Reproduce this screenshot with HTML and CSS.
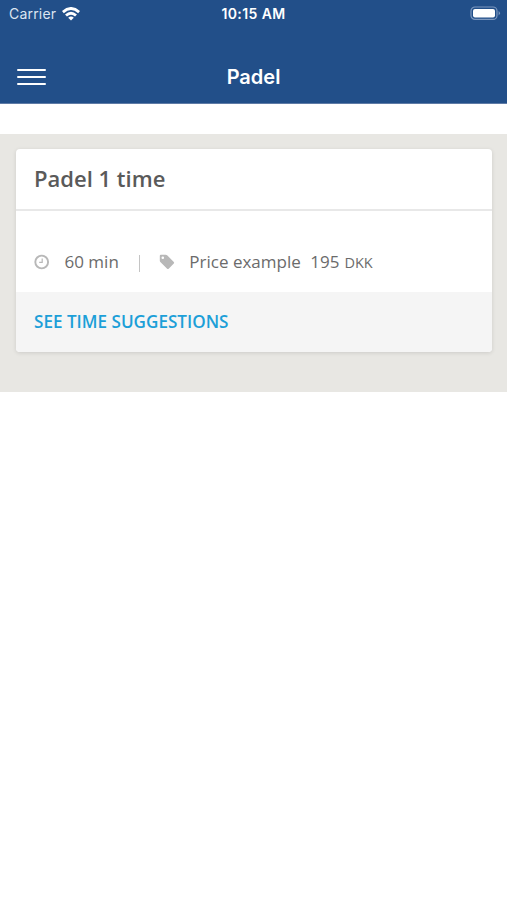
FILE: index.html
```html
<!DOCTYPE html>
<html lang="en">
<head>
<meta charset="UTF-8">
<meta name="viewport" content="width=device-width, initial-scale=1.0">
<title>Padel</title>

<link rel="stylesheet" href="styles.css">
</head>

<body>

<!-- HEADER -->
<header>
  <div class="status">
    <div class="carrier">
      <span>Carrier</span>
      <svg class="wifi" width="18" height="14" viewBox="0 0 18 14" fill="none" stroke="#fff" stroke-width="2.8">
        <path d="M.9 5.1Q9-2.2 17.1 5.1"/>
        <path d="M4 8.6Q9 3.9 14 8.6"/>
        <path d="M9 13.6L6.2 10.7Q9 8.5 11.8 10.7Z" fill="#fff" stroke="none"/>
      </svg>
    </div>
    <div class="clock">10:15 AM</div>
    <div class="power">
      <svg width="31" height="15" viewBox="0 0 31 15">
        <rect x="1" y="1" width="26" height="12.4" rx="4" fill="none" stroke="#7d98bf" stroke-width="1.2"/>
        <rect x="3" y="3" width="22" height="8.4" rx="2" fill="#fff"/>
        <path d="M28.6 5Q31.4 7.2 28.6 9.4Z" fill="#7d98bf"/>
      </svg>
    </div>
  </div>
  <div class="navbar">
    <div class="menu">
      <span></span>
      <span></span>
      <span></span>
    </div>
    <h1>Padel</h1>
  </div>
</header>

<!-- ACTIVITIES -->
<main>
  <section class="card">
    <h2>Padel 1 time</h2>
    <div class="info">
      <svg class="time-icon" width="16" height="16" viewBox="0 0 16 16" fill="none" stroke="#b8b8b8">
        <circle cx="7.7" cy="8" r="6.4" stroke-width="1.9"/>
        <path d="M8.2 4.4V8.4H5.2" stroke-width="1.2"/>
      </svg>
      <span class="duration">60 min</span>
      <span class="line"></span>
      <svg class="tag-icon" width="16" height="16" viewBox="0 0 16 16">
        <path fill="#b8b8b8" fill-rule="evenodd" d="M1.8.8H6.6Q7.6.8 8.4 1.6L14.8 8Q15.6 8.8 14.8 9.6L9.7 14.7Q8.9 15.4 8.1 14.7L1.6 8.2Q.8 7.4.8 6.4V1.8Q.8.8 1.8.8ZM3.8 2.5A1.3 1.3 0 1 0 3.8 5.1A1.3 1.3 0 1 0 3.8 2.5Z"/>
      </svg>
      <span class="label">Price example</span>
      <span class="price">195</span>
      <span class="currency">DKK</span>
    </div>
    <a class="suggestions" href="#">SEE TIME SUGGESTIONS</a>
  </section>
</main>

</body>
</html>
```

FILE: styles.css
```css
/* RESET */
*{
  margin:0;
  padding:0;
  box-sizing:border-box;
}

body{
  background:#fff;
  color:#6b6b6b;
  font-family:"Open Sans", sans-serif;
}

/* HEADER */
header{
  height:104px;
  background:#224f89;
  border-bottom:1px solid #5f7ba6;
  color:white;
  font-family:Inter, sans-serif;
}

.status{
  display:grid;
  grid-template-columns:1fr auto 1fr;
  align-items:center;
  height:27px;
  padding:0 6px 0 9px;
}

.carrier{
  display:flex;
  align-items:center;
  gap:6px;
  font-size:14px;
  letter-spacing:0.2px;
  color:#dce5f1;
}

.clock{
  margin-right:3px;
  font-size:14px;
  font-weight:600;
  letter-spacing:0.4px;
}

.power{
  display:flex;
  justify-content:flex-end;
}

.navbar{
  display:grid;
  grid-template-columns:1fr auto 1fr;
  align-items:center;
  height:54px;
  margin-top:22px;
  padding:0 16px;
}

.menu{
  display:flex;
  flex-direction:column;
  gap:4.6px;
  width:29px;
  margin:2px 0 0 1px;
}

.menu span{
  height:2.5px;
  background:white;
  border-radius:1px;
}

h1{
  margin-top:2px;
  font-size:20px;
  font-weight:600;
}

/* ACTIVITIES */
main{
  height:258px;
  margin-top:30px;
  padding:15px 15px 0 16px;
  background:#e8e7e3;
}

.card{
  height:203px;
  background:white;
  border-radius:4px;
  box-shadow:0 1px 4px rgba(0,0,0,0.12);
  overflow:hidden;
}

h2{
  height:62px;
  padding-left:18px;
  border-bottom:2px solid #e8e8e8;
  color:#5a5a5a;
  font-size:22px;
  font-weight:600;
  line-height:59px;
}

.info{
  display:flex;
  align-items:center;
  height:81px;
  padding:19px 0 0 18px;
  font-size:17px;
}

.duration{
  margin-left:14.5px;
}

.line{
  width:1px;
  height:17px;
  margin:4px 19px 0 20px;
  background:#c4c4c4;
}

.time-icon,
.tag-icon{
  margin-top:1px;
}

.label{
  margin-left:14.5px;
}

.price{
  margin-left:9.5px;
}

.currency{
  margin:2px 0 0 5px;
  font-size:14.5px;
}

.suggestions{
  display:block;
  height:60px;
  padding-left:18px;
  background:#f5f5f5;
  color:#1c9fd8;
  font-size:17.1px;
  font-weight:600;
  line-height:59px;
  text-decoration:none;
}
```
